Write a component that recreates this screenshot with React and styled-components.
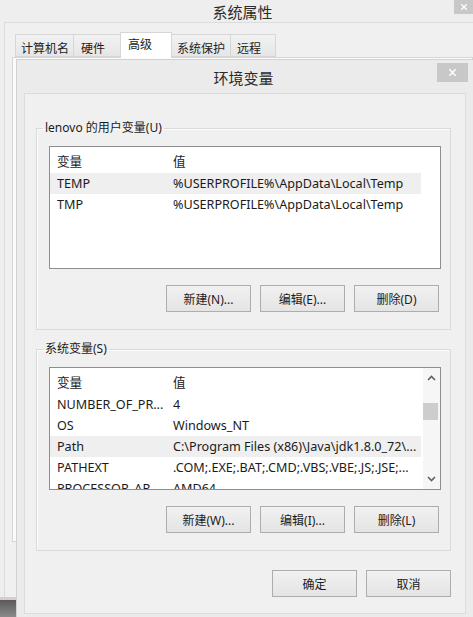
import React from "react";
import styled, { createGlobalStyle } from "styled-components";

const Global = createGlobalStyle`
  html, body { margin: 0; padding: 0; }
  body {
    width: 473px; height: 617px; overflow: hidden;
    background: #ececec;
    font-family: "Noto Sans", "Noto Sans CJK SC", sans-serif;
    font-size: 12px;
    color: #1b1b1b;
  }
  * { box-sizing: border-box; }
`;

const Screen = styled.div`
  position: relative;
  width: 473px;
  height: 617px;
  overflow: hidden;
  display: flex;
  flex-direction: column;
`;

/* ---------- System properties window (behind) ---------- */
const SysWindow = styled.div`
  height: 597px;
  background: #eeeeee;
  display: flex;
  flex-direction: column;
`;

const TitleBar = styled.div`
  height: ${(p) => p.$h}px;
  display: grid;
  grid-template-columns: 1fr auto 1fr;
  align-items: center;
  flex-shrink: 0;
`;

const Title = styled.div`
  grid-column: 2;
  font-family: "Noto Sans CJK SC", sans-serif;
  font-size: 15px;
  color: #2a2a2a;
  line-height: 1;
  padding-top: ${(p) => p.$pt || 0}px;
  margin-left: ${(p) => p.$shift || 0}px;
`;

const CloseBtn = styled.div`
  grid-column: 3;
  justify-self: end;
  align-self: start;
  width: ${(p) => p.$w}px;
  height: ${(p) => p.$h}px;
  margin-top: ${(p) => p.$mt || 0}px;
  margin-right: ${(p) => p.$mr || 0}px;
  background: #c8c8c8;
  color: #ffffff;
  display: flex;
  align-items: center;
  justify-content: center;
`;

const SysBody = styled.div`
  flex: 1;
  margin-left: 4px;
  border-top: 1px solid #dcdcdc;
  border-left: 1px solid #dcdcdc;
  background: #f0f0f0;
  padding-top: 9px;
  display: flex;
  flex-direction: column;
`;

const TabRow = styled.div`
  display: flex;
  align-items: flex-end;
  height: 25px;
  padding-left: 10px;
  position: relative;
  z-index: 1;
`;

const Tab = styled.div`
  width: ${(p) => p.$w}px;
  height: ${(p) => (p.$active ? 26 : 23)}px;
  margin-left: ${(p) => (p.$first ? 0 : -1)}px;
  margin-bottom: ${(p) => (p.$active ? -1 : 0)}px;
  padding-left: ${(p) => p.$pl || 5}px;
  padding-top: ${(p) => (p.$active ? 3 : 5)}px;
  border: 1px solid #d6d6d6;
  border-bottom: ${(p) => (p.$active ? "none" : "1px solid #d6d6d6")};
  background: ${(p) => (p.$active ? "#ffffff" : "linear-gradient(#f2f2f2, #e6e6e6)")};
  font-family: "Noto Sans CJK SC", sans-serif;
  font-size: 12px;
  line-height: 15px;
  color: #222;
  white-space: nowrap;
`;

const TabPanel = styled.div`
  margin-left: 7px;
  height: 485px;
  border: 1px solid #d6d6d6;
  background: #fbfbfb;
`;

const Desktop = styled.div`
  flex: 1;
  border-top: 3px solid #dcc9ce;
  background: linear-gradient(#5a5a5a, #8a8a8a);
`;

/* ---------- Environment variables dialog (on top) ---------- */
const Dialog = styled.div`
  position: absolute;
  left: 16px;
  top: 59px;
  width: 460px;
  height: 560px;
  border: 1px solid #d2d2d2;
  background: #ebebeb;
  display: flex;
  flex-direction: column;
`;

const Client = styled.div`
  flex: 1;
  margin: 0 9px 4px 7px;
  border: 1px solid #dcdcdc;
  background: #f0f0f0;
  display: flex;
  flex-direction: column;
`;

const Group = styled.fieldset`
  margin: ${(p) => p.$mt}px 14px 0 11px;
  padding: 10px 0 17px 0;
  border: 1px solid #dadada;
  box-shadow: inset 1px 1px 0 #fbfbfb;
  min-width: 0;
`;

const GroupContent = styled.div`
  padding: 0 9px 0 12px;
`;

const Legend = styled.legend`
  margin-left: 6px;
  padding: 0 2px;
  font-size: 12px;
  line-height: 16px;
  color: #1b1b1b;
`;

const ListBox = styled.div`
  height: 123px;
  border: 1px solid #8e8e8e;
  background: #ffffff;
  display: flex;
  overflow: hidden;
`;

const ListBody = styled.div`
  flex: 1;
  overflow: hidden;
`;

const Row = styled.div`
  width: 371px;
  height: ${(p) => (p.$header ? 26 : 21)}px;
  display: grid;
  grid-template-columns: 116px 1fr;
  align-items: center;
  padding-left: 7px;
  background: ${(p) => (p.$sel ? "#efefef" : "transparent")};
  white-space: nowrap;
  color: #1b1b1b;
  font-size: 12.6px;
`;

const Cell = styled.span`
  overflow: hidden;
`;

const ScrollBar = styled.div`
  width: 17px;
  background: #f6f6f6;
  display: flex;
  flex-direction: column;
  align-items: center;
`;

const Arrow = styled.div`
  height: 20px;
  width: 17px;
  display: flex;
  align-items: center;
  justify-content: center;
`;

const Track = styled.div`
  flex: 1;
  width: 17px;
  padding-top: 15px;
`;

const Thumb = styled.div`
  width: 15px;
  height: 17px;
  background: #cdcdcd;
`;

const ButtonRow = styled.div`
  display: flex;
  justify-content: flex-end;
  gap: 9px;
  margin-top: ${(p) => p.$mt}px;
  margin-right: ${(p) => p.$mr || 0}px;
`;

const Button = styled.div`
  width: 85px;
  height: 27px;
  border: 1px solid #adadad;
  background: linear-gradient(#f1f1f1, #e4e4e4);
  display: flex;
  align-items: center;
  justify-content: center;
  font-size: 12px;
  color: #1b1b1b;
  white-space: nowrap;
`;

const Chevron = ({ down }) => (
  <svg width="9" height="6" viewBox="0 0 9 6">
    <polyline
      points={down ? "1,1 4.5,4.5 8,1" : "1,5 4.5,1.5 8,5"}
      fill="none"
      stroke="#606060"
      strokeWidth="1.6"
    />
  </svg>
);

const XMark = ({ size }) => (
  <svg width={size} height={size} viewBox="0 0 10 10">
    <path d="M1.5 1.5 L8.5 8.5 M8.5 1.5 L1.5 8.5" stroke="#fff" strokeWidth="1.6" />
  </svg>
);

const userVars = [
  ["TEMP", "%USERPROFILE%\\AppData\\Local\\Temp", true],
  ["TMP", "%USERPROFILE%\\AppData\\Local\\Temp", false],
];

const sysVars = [
  ["NUMBER_OF_PR...", "4", false],
  ["OS", "Windows_NT", false],
  ["Path", "C:\\Program Files (x86)\\Java\\jdk1.8.0_72\\...", true],
  ["PATHEXT", ".COM;.EXE;.BAT;.CMD;.VBS;.VBE;.JS;.JSE;...", false],
  ["PROCESSOR_AR...", "AMD64", false],
];

function VarList({ rows, scroll }) {
  return (
    <ListBox>
      <ListBody>
        <Row $header>
          <Cell>变量</Cell>
          <Cell>值</Cell>
        </Row>
        {rows.map(([k, v, sel]) => (
          <Row key={k} $sel={sel}>
            <Cell>{k}</Cell>
            <Cell>{v}</Cell>
          </Row>
        ))}
      </ListBody>
      {scroll && (
        <ScrollBar>
          <Arrow>
            <Chevron />
          </Arrow>
          <Track>
            <Thumb />
          </Track>
          <Arrow>
            <Chevron down />
          </Arrow>
        </ScrollBar>
      )}
    </ListBox>
  );
}

export default function App() {
  return (
    <>
      <Global />
      <Screen>
        <SysWindow>
          <TitleBar $h={22}>
            <Title $shift={12}>系统属性</Title>
            <CloseBtn $w={19} $h={14}>
              <XMark size={8} />
            </CloseBtn>
          </TitleBar>
          <SysBody>
            <TabRow>
              <Tab $w={59} $first>计算机名</Tab>
              <Tab $w={48} $pl={7}>硬件</Tab>
              <Tab $w={52} $pl={7} $active>高级</Tab>
              <Tab $w={60}>系统保护</Tab>
              <Tab $w={46} $pl={6}>远程</Tab>
            </TabRow>
            <TabPanel />
          </SysBody>
        </SysWindow>
        <Desktop />

        <Dialog>
          <TitleBar $h={33}>
            <Title $pt={2} $shift={-5}>环境变量</Title>
            <CloseBtn $w={31} $h={19} $mt={3} $mr={7}>
              <XMark size={9} />
            </CloseBtn>
          </TitleBar>
          <Client>
            <Group $mt={26}>
              <Legend>lenovo 的用户变量(U)</Legend>
              <GroupContent>
                <VarList rows={userVars} />
                <ButtonRow $mt={16} $mr={2}>
                  <Button>新建(N)...</Button>
                  <Button>编辑(E)...</Button>
                  <Button>删除(D)</Button>
                </ButtonRow>
              </GroupContent>
            </Group>
            <Group $mt={11}>
              <Legend>系统变量(S)</Legend>
              <GroupContent>
                <VarList rows={sysVars} scroll />
                <ButtonRow $mt={16} $mr={2}>
                  <Button>新建(W)...</Button>
                  <Button>编辑(I)...</Button>
                  <Button>删除(L)</Button>
                </ButtonRow>
              </GroupContent>
            </Group>
            <ButtonRow $mt={19} $mr={14}>
              <Button>确定</Button>
              <Button>取消</Button>
            </ButtonRow>
          </Client>
        </Dialog>
      </Screen>
    </>
  );
}
